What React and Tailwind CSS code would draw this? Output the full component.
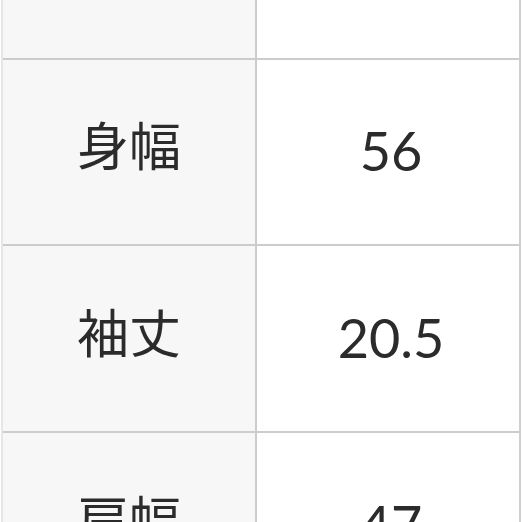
import React from "react";

const rows = [
  { label: "", value: "", h: "h-[60px]" },
  { label: "身幅", value: "56", h: "h-[186px]" },
  { label: "袖丈", value: "20.5", h: "h-[187px]" },
  { label: "肩幅", value: "47", h: "h-[186px]" },
];

export default function App() {
  return (
    <div className="w-[522px] h-[522px] overflow-hidden bg-white">
      <div className="ml-[1px] w-[520px] border-l-2 border-r-2 border-l-[#e6e6e6] border-r-[#cfcfcf]">
        {rows.map((row, i) => (
          <div
            key={i}
            className={`flex ${row.h} ${i < rows.length - 1 ? "border-b-2 border-[#cccccc]" : ""}`}
          >
            <div className="w-[254px] shrink-0 flex items-center justify-center bg-[#f7f7f7] border-r-2 border-[#cccccc]">
              <span
                className="text-[52px] leading-none text-[#2b2b2b] -mt-[16px]"
                style={{ fontFamily: '"Noto Sans CJK JP", sans-serif' }}
              >
                {row.label}
              </span>
            </div>
            <div className="flex-1 flex items-center justify-center">
              <span
                className="text-[54px] leading-none text-[#2b2b2b] ml-[6px] -mt-[2px]"
                style={{ fontFamily: "Lato, sans-serif" }}
              >
                {row.value}
              </span>
            </div>
          </div>
        ))}
      </div>
    </div>
  );
}
